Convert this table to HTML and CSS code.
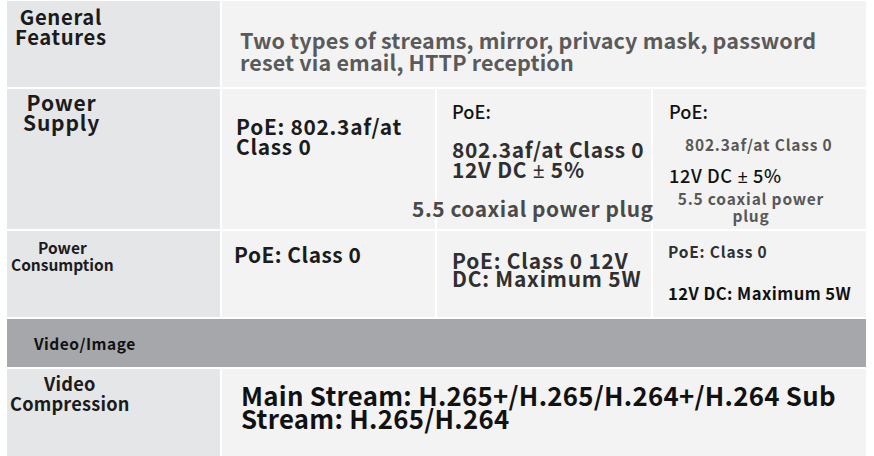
FILE: index.html
```html
<!DOCTYPE html>
<html>
<head>
<meta charset="utf-8">
<link rel="stylesheet" href="styles.css">
</head>
<body>
<div class="spec">
  <div class="label r1"><div class="lt lt-lg">General<br>Features</div></div>
  <div class="cell span3 gen"><p class="gen-text">Two types of streams, mirror, privacy mask, password reset via email, HTTP reception</p></div>

  <div class="label r2"><div class="lt lt-lg ps">Power<br>Supply</div></div>
  <div class="cell ps1"><p class="big">PoE: 802.3af/at<br>Class 0</p></div>
  <div class="cell ps2">
    <p class="plain">PoE:</p>
    <p class="big dk ps2-main">802.3af/at Class 0<br>12V DC <span class="pm">±</span> 5%</p>
    <p class="big gr ps2-plug">5.5 coaxial power plug</p>
  </div>
  <div class="cell ps3">
    <p class="plain">PoE:</p>
    <p class="small gr ps3-std">802.3af/at Class 0</p>
    <p class="plain ps3-dc">12V DC <span class="pm">±</span> 5%</p>
    <p class="small gr ps3-plug">5.5 coaxial power<br>plug</p>
  </div>

  <div class="label r3"><div class="lt lt-sm pc">Power<br>Consumption</div></div>
  <div class="cell pc1"><p class="big">PoE: Class 0</p></div>
  <div class="cell pc2"><p class="big dk">PoE: Class 0 12V<br>DC: Maximum 5W</p></div>
  <div class="cell pc3">
    <p class="small dk">PoE: Class 0</p>
    <p class="mid pc3-dc">12V DC: Maximum 5W</p>
  </div>

  <div class="section"><span>Video/Image</span></div>

  <div class="label r5"><div class="lt lt-md vc">Video<br>Compression</div></div>
  <div class="cell span3 vcc"><p class="huge">Main Stream: H.265+/H.265/H.264+/H.264 Sub Stream: H.265/H.264</p></div>
</div>
</body>
</html>
```

FILE: styles.css
```css
* { box-sizing: border-box; }
html, body { margin: 0; padding: 0; background: #ffffff; }
body {
  width: 874px;
  height: 456px;
  overflow: hidden;
  font-family: "Noto Sans CJK SC", "Noto Sans", sans-serif;
  color: #1b1b1b;
}
p { margin: 0; }

.spec {
  display: grid;
  grid-template-columns: 213px 213px 214px 213px;
  grid-template-rows: 86px 140px 86px 48px 90px;
  column-gap: 2px;
  row-gap: 2px;
  padding: 1px 0 0 7px;
}

.label { background: #e5e6e8; }
.cell { background: #f3f3f3; }
.span3 { grid-column: 2 / span 3; }

.lt {
  display: inline-block;
  text-align: center;
  font-weight: 700;
}
.lt-lg { font-size: 20.3px; line-height: 20px; letter-spacing: 0.65px; padding: 5px 0 0 8px; }
.ps { font-size: 21px; letter-spacing: 0.8px; padding: 3px 0 0 16px; }
.lt-sm { font-size: 15.5px; line-height: 17px; padding: 8px 0 0 4px; }
.lt-md { font-size: 18.2px; line-height: 20px; letter-spacing: 0.2px; padding: 4px 0 0 3px; }

.gen { padding: 28px 0 0 18px; }
.gen-text {
  font-size: 21.5px;
  line-height: 22px;
  letter-spacing: 0.15px;
  font-weight: 700;
  color: #5a5a5a;
  width: 610px;
}

.pm { font-family: "Noto Sans", "DejaVu Sans", sans-serif; font-weight: 400; }

.big { font-size: 20.9px; line-height: 20px; letter-spacing: 0.72px; font-weight: 700; }
.dk { color: #2f2f2f; }
.gr { color: #4a4a4a; }
.small { font-size: 15.5px; line-height: 17px; letter-spacing: 0.8px; font-weight: 700; }
.mid { font-size: 16.6px; line-height: 18px; letter-spacing: 0.45px; font-weight: 700; }
.plain { font-size: 18.2px; line-height: 20px; font-weight: 500; color: #111; }

.ps1 { padding: 27px 0 0 14px; }
.ps2 { padding: 12px 0 0 15px; position: relative; z-index: 1; }
.ps2-main { margin-top: 18px; }
.ps2-plug { margin: 18px 0 0 -40px; white-space: nowrap; letter-spacing: 0.55px; }
.ps3 { padding: 12px 0 0 16px; }
.ps3-std { margin: 15px 0 0 16px; color: #585858; }
.ps3-dc { margin-top: 12px; letter-spacing: 0.6px; }
.ps3-plug { text-align: center; width: 164px; color: #585858; margin-top: 4px; }

.pc1 { padding: 13px 0 0 12px; }
.pc1 .big { letter-spacing: 0.5px; }
.pc2 { padding: 20px 0 0 15px; }
.pc2 .big { letter-spacing: 0.8px; line-height: 18px; }
.pc3 { padding: 12px 0 0 15px; }
.pc3-dc { margin-top: 24px; color: #111; }

.section {
  grid-column: 1 / span 4;
  background: #a6a7aa;
  font-size: 15.5px;
  letter-spacing: 0.5px;
  font-weight: 700;
  color: #111;
  padding: 13px 0 0 27px;
}

.vcc { padding: 14px 0 0 19px; }
.huge {
  font-size: 25.75px;
  line-height: 23px;
  letter-spacing: 0.3px;
  font-weight: 700;
  color: #111;
  width: 620px;
}
```
